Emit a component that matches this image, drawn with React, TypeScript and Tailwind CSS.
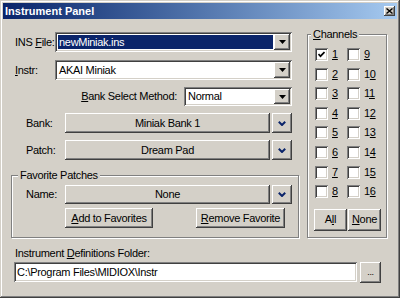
import React from "react"

const raised =
  "bg-[#d4d0c8] shadow-[inset_-1px_-1px_#404040,inset_1px_1px_#ffffff,inset_-2px_-2px_#808080]"
const sunken =
  "shadow-[inset_1px_1px_#808080,inset_-1px_-1px_#ffffff,inset_2px_2px_#404040,inset_-2px_-2px_#d4d0c8]"
const etched = "border border-[#808080] shadow-[inset_1px_1px_#ffffff,1px_1px_#ffffff]"

function Tri() {
  return (
    <svg width="7" height="4" viewBox="0 0 7 4">
      <polygon points="0,0 7,0 3.5,4" fill="#000" />
    </svg>
  )
}

function Chevron() {
  return (
    <svg width="8" height="5" viewBox="0 0 8 5">
      <polyline points="0.8,0.8 4,4 7.2,0.8" fill="none" stroke="#0a246a" strokeWidth="2" />
    </svg>
  )
}

function Combo({ value, size, selected }: { value: string; size: string; selected?: boolean }) {
  return (
    <div className={`${sunken} bg-white flex p-[2px] ${size}`}>
      <div className="flex-1 flex p-[1px]">
        {selected ? (
          <div className="flex-1 bg-[#0a246a] text-white flex items-center pl-[1px]">{value}</div>
        ) : (
          <div className="flex-1 flex items-center pl-[1px]">{value}</div>
        )}
      </div>
      <div className={`${raised} w-[16px] flex items-center justify-center`}>
        <Tri />
      </div>
    </div>
  )
}

function PickRow({ label, value, h }: { label: string; value: string; h: string }) {
  return (
    <div className={`flex items-center ${h}`}>
      <span className="w-[39px]">{label}</span>
      <div className={`${raised} w-[205px] h-full flex items-center justify-center`}>{value}</div>
      <div className={`${raised} w-[20px] h-full ml-[2px] flex items-center justify-center`}>
        <Chevron />
      </div>
    </div>
  )
}

function Check({ n, on }: { n: string; on?: boolean }) {
  const last = n.length > 1
  return (
    <div className="flex items-center w-[32px]">
      <div className={`${sunken} bg-white w-[13px] h-[13px] flex items-center justify-center`}>
        {on && (
          <svg width="7" height="7" viewBox="0 0 7 7">
            <polyline points="0.5,3 2.5,5.2 6.5,1" fill="none" stroke="#000" strokeWidth="1.7" />
          </svg>
        )}
      </div>
      <span className="ml-[4px]">
        {last ? (
          <>
            {n[0]}
            <u>{n[1]}</u>
          </>
        ) : (
          <u>{n}</u>
        )}
      </span>
    </div>
  )
}

export default function App() {
  const rows = [
    ["1", "9"],
    ["2", "10"],
    ["3", "11"],
    ["4", "12"],
    ["5", "13"],
    ["6", "14"],
    ["7", "15"],
    ["8", "16"],
  ]

  return (
    <div className="w-[400px] h-[298px] bg-[#d4d0c8] p-[3px] text-[11px] leading-[13px] tracking-[-0.3px] text-black font-['Liberation_Sans',Arial,sans-serif] shadow-[inset_-1px_-1px_#404040,inset_1px_1px_#d4d0c8,inset_-2px_-2px_#808080,inset_2px_2px_#ffffff]">
      {/* title bar */}
      <div className="h-[16px] flex items-center bg-gradient-to-r from-[#0a246a] to-[#a6caf0]">
        <span className="pl-[2px] text-white font-bold tracking-normal">Instrument Panel</span>
        <div className={`${raised} ml-auto mr-[2px] w-[11px] h-[10px] flex items-center justify-center`}>
          <svg width="7" height="6" viewBox="0 0 7 6">
            <path d="M0.5 0.5 L6.5 5.5 M6.5 0.5 L0.5 5.5" stroke="#000" strokeWidth="1.4" />
          </svg>
        </div>
      </div>

      <div className="flex h-[219px]">
        {/* left side */}
        <div className="w-[296px] flex flex-col">
          <div className="mt-[13px] ml-[12px] flex items-center h-[20px]">
            <span className="w-[40px]">
              INS <u>F</u>ile:
            </span>
            <Combo value="newMiniak.ins" size="w-[237px] h-[20px]" selected />
          </div>
          <div className="mt-[8px] ml-[12px] flex items-center h-[20px]">
            <span className="w-[40px]">
              <u>I</u>nstr:
            </span>
            <Combo value="AKAI Miniak" size="w-[237px] h-[20px]" />
          </div>
          <div className="mt-[7px] ml-[12px] w-[277px] flex items-center justify-end h-[19px]">
            <span className="mr-[7px]">
              <u>B</u>ank Select Method:
            </span>
            <Combo value="Normal" size="w-[108px] h-[19px]" />
          </div>
          <div className="mt-[7px] ml-[23px]">
            <PickRow label="Bank:" value="Miniak Bank 1" h="h-[20px]" />
          </div>
          <div className="mt-[7px] ml-[23px]">
            <PickRow label="Patch:" value="Dream Pad" h="h-[20px]" />
          </div>

          <div className={`${etched} relative mt-[15px] ml-[8px] w-[288px] h-[63px] pt-[9px]`}>
            <span className="absolute -top-[7px] left-[6px] px-[2px] bg-[#d4d0c8]">Favorite Patches</span>
            <div className="ml-[14px]">
              <PickRow label="Name:" value="None" h="h-[19px]" />
            </div>
            <div className="flex mt-[4px] ml-[53px] h-[20px]">
              <div className={`${raised} w-[88px] flex items-center justify-center`}>
                <span>
                  <u>A</u>dd to Favorites
                </span>
              </div>
              <div className={`${raised} w-[89px] ml-[43px] flex items-center justify-center`}>
                <span>
                  <u>R</u>emove Favorite
                </span>
              </div>
            </div>
          </div>
        </div>

        {/* channels */}
        <div className={`${etched} relative ml-[8px] mt-[15px] w-[80px] h-[204px] pt-[13px] pl-[7px]`}>
          <span className="absolute -top-[7px] left-[3px] px-[2px] bg-[#d4d0c8]">
            <u>C</u>hannels
          </span>
          <div className="flex flex-col">
            {rows.map(([a, b]) => (
              <div key={a} className="flex h-[19.6px] items-start">
                <Check n={a} on={a === "1"} />
                <Check n={b} />
              </div>
            ))}
          </div>
          <div className="flex -ml-[1px] mt-[4px] h-[22px]">
            <div className={`${raised} w-[33px] flex items-center justify-center`}>
              <span>
                A<u>l</u>l
              </span>
            </div>
            <div className={`${raised} w-[33px] ml-[1px] flex items-center justify-center`}>
              <span>
                <u>N</u>one
              </span>
            </div>
          </div>
        </div>
      </div>

      <div className="mt-[9px] ml-[12px]">
        Instrument <u>D</u>efinitions Folder:
      </div>
      <div className="flex mt-[2px] ml-[11px]">
        <div className={`${sunken} bg-white w-[343px] h-[20px] flex items-center pl-[3px]`}>
          C:\Program Files\MIDIOX\Instr
        </div>
        <div className={`${raised} ml-[3px] w-[21px] h-[21px] flex items-center justify-center`}>
          <span className="text-[9px] leading-none">...</span>
        </div>
      </div>
    </div>
  )
}
